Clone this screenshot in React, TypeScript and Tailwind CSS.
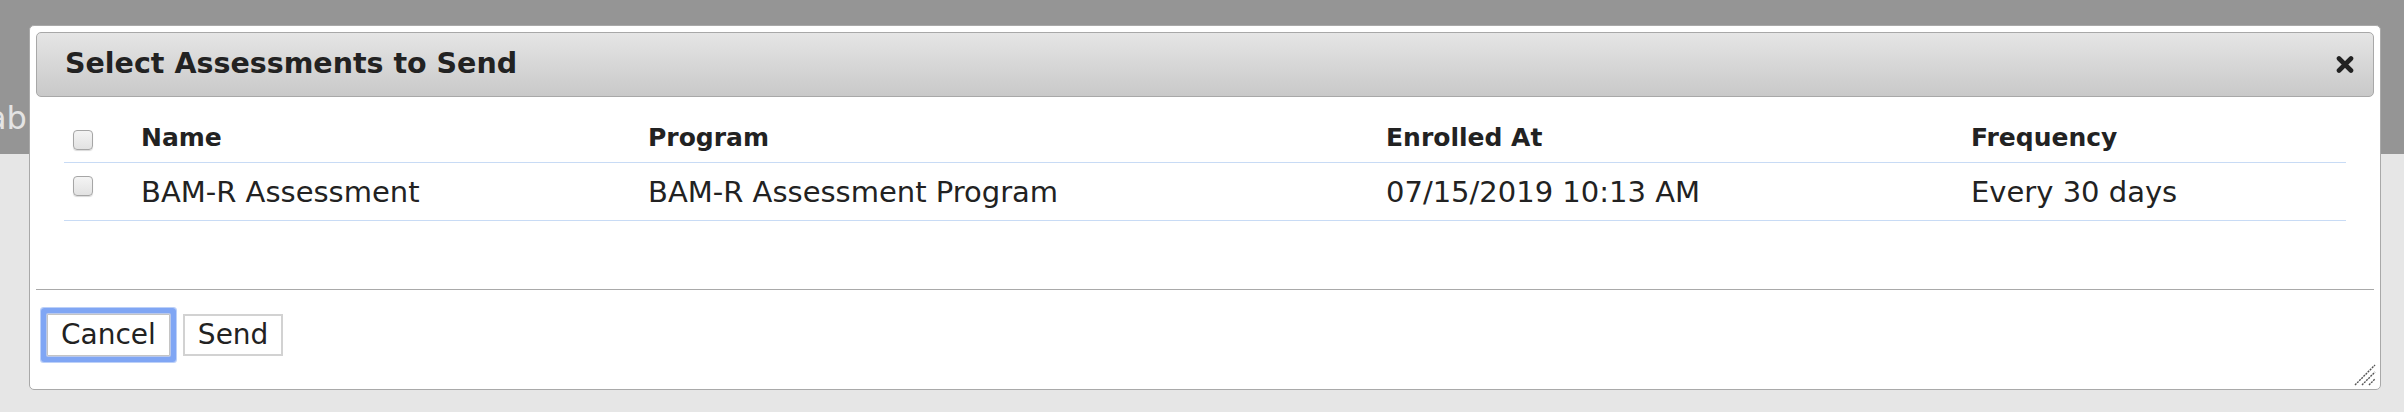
import React from 'react';

const font = { fontFamily: '"DejaVu Sans", Verdana, sans-serif' };

interface Assessment {
  name: string;
  program: string;
  enrolledAt: string;
  frequency: string;
}

const rows: Assessment[] = [
  {
    name: 'BAM-R Assessment',
    program: 'BAM-R Assessment Program',
    enrolledAt: '07/15/2019 10:13 AM',
    frequency: 'Every 30 days',
  },
];

function Check({ className = '' }: { className?: string }) {
  return (
    <span
      className={`block w-[20px] h-[20px] rounded-[4px] border border-[#a6a6a6] bg-gradient-to-b from-[#f4f4f4] to-[#e2e2e2] shadow-[0_1px_1px_rgba(0,0,0,0.15)] ${className}`}
    />
  );
}

function CloseIcon() {
  return (
    <svg width="18" height="17" viewBox="0 0 18 17" className="block">
      <path d="M3 2.5 L15 14.5 M15 2.5 L3 14.5" stroke="#222" strokeWidth="4.6" strokeLinecap="round" />
    </svg>
  );
}

function Grip() {
  return (
    <svg width="22" height="22" viewBox="0 0 22 22" className="absolute right-[4px] bottom-[3px]">
      <path d="M1 21 L21 1 M8 21 L21 8 M15 21 L21 15" stroke="#555" strokeWidth="1.4" strokeDasharray="2 1" />
    </svg>
  );
}

export default function App() {
  return (
    <div className="relative w-[2404px] h-[412px] overflow-hidden bg-[#e6e6e6]" style={font}>
      <div className="h-[154px] bg-[#959595] overflow-hidden">
        <div className="pt-[99px] -ml-[13px] text-[32px] leading-[38px] text-[#e4e4e4]">ab</div>
      </div>

      <div className="absolute left-[29px] top-[25px] w-[2352px] h-[365px] flex flex-col bg-white border border-[#a9a9a9] rounded-[5px] p-[6px]">
        <div className="h-[65px] shrink-0 flex items-center justify-between pl-[28px] pr-[19px] border border-[#a8a8a8] rounded-[5px] bg-gradient-to-b from-[#e5e5e5] to-[#c9c9c9]">
          <span className="text-[28.5px] font-bold text-[#222]">Select Assessments to Send</span>
          <CloseIcon />
        </div>

        <div className="flex-1 pt-[16px] px-[28px]">
          <div className="grid grid-cols-[77px_507px_738px_585px_1fr] border-b border-[#c8dbf5] pb-[9px] pt-[10px] text-[25px] leading-[30px] font-bold text-[#222]">
            <div className="pl-[9px] pt-[7px]">
              <Check />
            </div>
            <div>Name</div>
            <div>Program</div>
            <div>Enrolled At</div>
            <div>Frequency</div>
          </div>
          {rows.map((r) => (
            <div
              key={r.name}
              className="grid grid-cols-[77px_507px_738px_585px_1fr] border-b border-[#c8dbf5] pt-[12px] pb-[11px] text-[29px] leading-[34px] text-[#222]"
            >
              <div className="pl-[9px] pt-[1px]">
                <Check />
              </div>
              <div>{r.name}</div>
              <div>{r.program}</div>
              <div>{r.enrolledAt}</div>
              <div>{r.frequency}</div>
            </div>
          ))}
        </div>

        <div className="shrink-0 border-t border-[#a9a9a9] pt-[24px] pb-[27px] pl-[11px] flex gap-[13px]">
          <button className="h-[42px] px-[13px] rounded-[1px] bg-white border border-[#c4c4c4] text-[28px] leading-[34px] text-[#222] shadow-[0_0_0_1px_#b9c8ea,0_0_0_6px_#80a6f4,0_0_0_7px_#bcd0f8]">
            Cancel
          </button>
          <button className="h-[42px] px-[13px] bg-white border-2 border-[#d2d2d2] text-[28px] leading-[34px] text-[#222]">
            Send
          </button>
        </div>

        <Grip />
      </div>
    </div>
  );
}
